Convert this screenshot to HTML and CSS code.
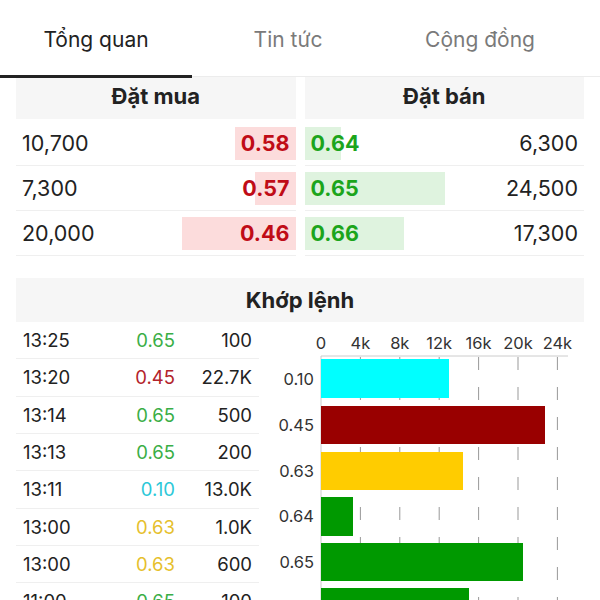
FILE: index.html
```html
<!DOCTYPE html>
<html lang="vi">
<head>
  <meta charset="UTF-8" />
  <meta name="viewport" content="width=device-width, initial-scale=1.0" />
  <title>Tổng quan</title>
  <link rel="stylesheet" href="styles.css">
</head>
<body>
  <nav class="tabs">
    <div class="tab active">Tổng quan</div>
    <div class="tab">Tin tức</div>
    <div class="tab">Cộng đồng</div>
  </nav>

  <div class="book">
    <div class="side bid">
      <div class="head">Đặt mua</div>
      <div class="row" style="--w: 61px"><span class="vol">10,700</span><span class="price">0.58</span></div>
      <div class="row" style="--w: 41px"><span class="vol">7,300</span><span class="price">0.57</span></div>
      <div class="row" style="--w: 114px"><span class="vol">20,000</span><span class="price">0.46</span></div>
    </div>
    <div class="side ask">
      <div class="head">Đặt bán</div>
      <div class="row" style="--w: 36px"><span class="price">0.64</span><span class="vol">6,300</span></div>
      <div class="row" style="--w: 140px"><span class="price">0.65</span><span class="vol">24,500</span></div>
      <div class="row" style="--w: 99px"><span class="price">0.66</span><span class="vol">17,300</span></div>
    </div>
  </div>

  <section class="matched">
    <div class="head">Khớp lệnh</div>
    <div class="matched-body">
      <div class="trades">
        <div class="trade"><span>13:25</span><span class="up">0.65</span><span>100</span></div>
        <div class="trade"><span>13:20</span><span class="down">0.45</span><span>22.7K</span></div>
        <div class="trade"><span>13:14</span><span class="up">0.65</span><span>500</span></div>
        <div class="trade"><span>13:13</span><span class="up">0.65</span><span>200</span></div>
        <div class="trade"><span>13:11</span><span class="floor">0.10</span><span>13.0K</span></div>
        <div class="trade"><span>13:00</span><span class="ref">0.63</span><span>1.0K</span></div>
        <div class="trade"><span>13:00</span><span class="ref">0.63</span><span>600</span></div>
        <div class="trade"><span>11:00</span><span class="up">0.65</span><span>100</span></div>
      </div>

      <svg class="chart" width="325" height="290" viewBox="0 0 325 290">
        <g class="axis-labels">
          <text x="62" y="27">0</text>
          <text x="101.4" y="27">4k</text>
          <text x="140.8" y="27">8k</text>
          <text x="180.2" y="27">12k</text>
          <text x="219.6" y="27">16k</text>
          <text x="259" y="27">20k</text>
          <text x="298.4" y="27">24k</text>
        </g>
        <g class="grid">
          <line x1="101.4" y1="35" x2="101.4" y2="290" />
          <line x1="140.8" y1="35" x2="140.8" y2="290" />
          <line x1="180.2" y1="35" x2="180.2" y2="290" />
          <line x1="219.6" y1="35" x2="219.6" y2="290" />
          <line x1="259" y1="35" x2="259" y2="290" />
          <line x1="298.4" y1="35" x2="298.4" y2="290" />
        </g>
        <line class="axis" x1="62" y1="34" x2="309" y2="34" />
        <line class="axis" x1="62" y1="34" x2="62" y2="290" />

        <rect x="62" y="37" width="128" height="39" fill="#00ffff" />
        <rect x="62" y="84" width="224" height="38" fill="#990000" />
        <rect x="62" y="130" width="142" height="38" fill="#ffcc00" />
        <rect x="62" y="175" width="32" height="39" fill="#009900" />
        <rect x="62" y="221" width="202" height="38" fill="#009900" />
        <rect x="62" y="266" width="148" height="38" fill="#009900" />

        <g class="bar-labels">
          <text x="55" y="63">0.10</text>
          <text x="55" y="109">0.45</text>
          <text x="55" y="155">0.63</text>
          <text x="55" y="200">0.64</text>
          <text x="55" y="246">0.65</text>
        </g>
      </svg>
    </div>
  </section>
</body>
</html>
```

FILE: styles.css
```css
body {
  margin: 0;
  background: #fff;
  color: #222;
  font-family: Inter, "Noto Sans", sans-serif;
  overflow: hidden;
}

.tabs {
  display: flex;
  height: 76px;
  border-bottom: 1px solid #ececec;
}

.tab {
  position: relative;
  width: 192px;
  display: flex;
  justify-content: center;
  align-items: center;
  padding-top: 2px;
  font-size: 21px;
  color: #7a7a7a;
}

.tab.active {
  color: #222;
}

.tab.active::after {
  content: "";
  position: absolute;
  left: 0;
  right: 0;
  bottom: -2px;
  height: 3px;
  background: #222;
}

.book {
  display: grid;
  grid-template-columns: 1fr 1fr;
  gap: 9px;
  padding: 0 16px;
}

.head {
  height: 42px;
  display: flex;
  justify-content: center;
  align-items: center;
  background: #f6f6f6;
  font-size: 22px;
  font-weight: 700;
  color: #222;
}

.side .head {
  margin-bottom: 2px;
  padding-bottom: 4px;
  box-sizing: border-box;
}

.row {
  height: 45px;
  box-sizing: border-box;
  display: flex;
  justify-content: space-between;
  align-items: center;
  padding: 0 6px;
  border-bottom: 1px solid #efefef;
  font-size: 21.5px;
}

.bid .row {
  background: linear-gradient(#fcdcdc, #fcdcdc) right 6px / var(--w) 33px no-repeat;
}

.ask .row {
  background: linear-gradient(#dff3df, #dff3df) left 6px / var(--w) 33px no-repeat;
}

.price {
  font-weight: 700;
}

.bid .price {
  color: #c00c17;
}

.ask .price {
  color: #1ca51c;
}

.matched {
  margin: 22px 16px 0;
}

.matched .head {
  height: 44px;
}

.matched-body {
  display: flex;
}

.trades {
  width: 243px;
  flex: none;
}

.trade {
  height: 37.33px;
  box-sizing: border-box;
  display: grid;
  grid-template-columns: 1fr 60px 77px;
  align-items: center;
  padding: 0 7px;
  border-bottom: 1px solid #efefef;
  font-size: 18.5px;
  color: #222;
}

.trade span:nth-child(2),
.trade span:nth-child(3) {
  text-align: right;
}

.up { color: #3aae46; }
.down { color: #b3232b; }
.floor { color: #2cc8d8; }
.ref { color: #e6bf2c; }

.chart {
  display: block;
  flex: none;
}

.chart text {
  font-family: Inter, "Noto Sans", sans-serif;
  font-size: 16.5px;
  fill: #333;
}

.axis-labels text {
  text-anchor: middle;
}

.bar-labels text {
  text-anchor: end;
}

.grid line {
  stroke: #999;
  stroke-width: 1;
  stroke-dasharray: 13 17;
}

.axis {
  stroke: #ccc;
  stroke-width: 1;
}
```
